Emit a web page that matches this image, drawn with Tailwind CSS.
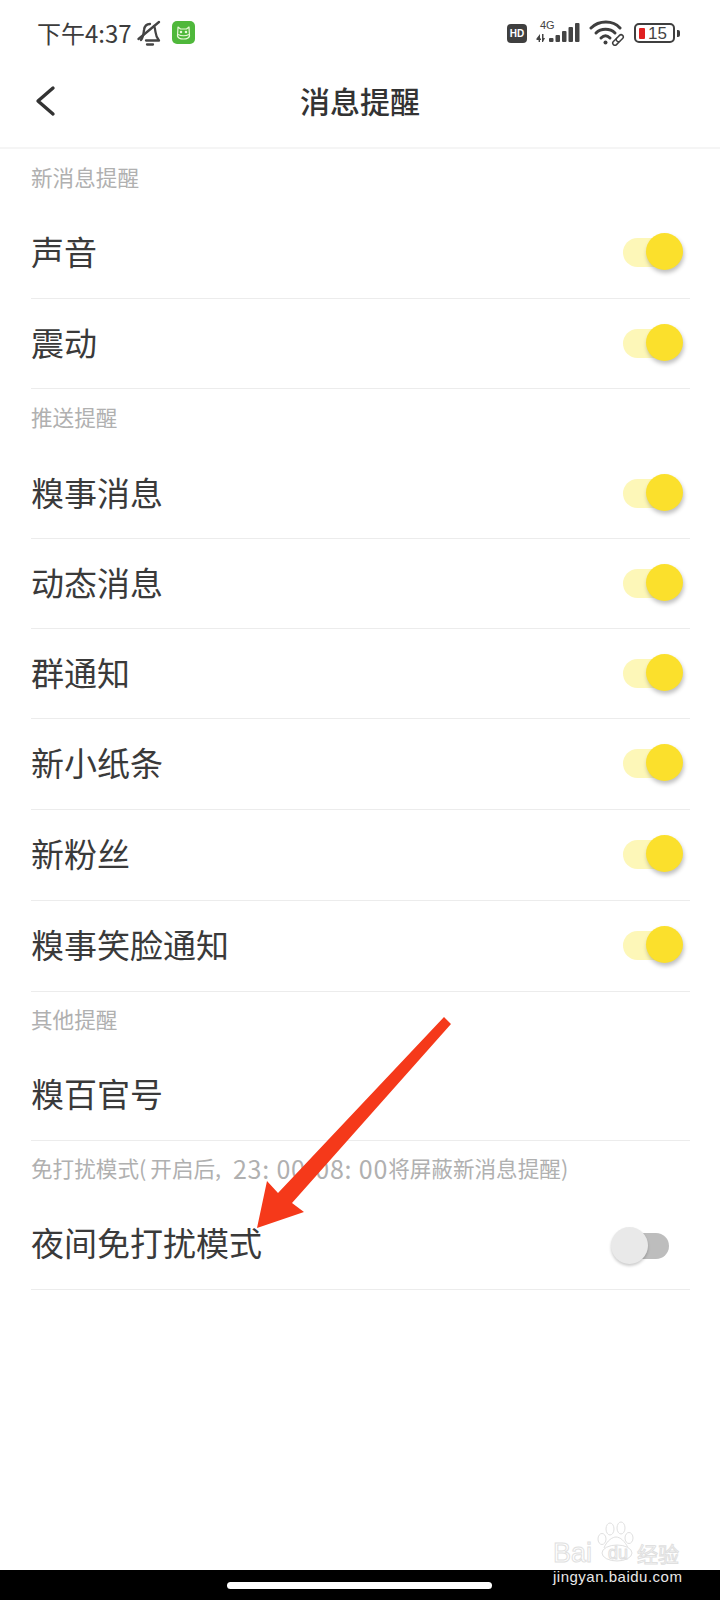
<!DOCTYPE html>
<html lang="zh-CN">
<head>
  <meta charset="UTF-8" />
  <meta name="viewport" content="width=device-width, initial-scale=1.0"/>
  <title>消息提醒</title>
  <script src="https://cdn.jsdelivr.net/npm/@tailwindcss/browser@4"></script>
</head>
<body class="bg-white font-['Noto_Sans_CJK_SC','Noto_Sans',sans-serif]">
<div class="relative w-[720px] h-[1600px] overflow-hidden flex flex-col bg-white">

  <!-- Status bar -->
  <div class="h-[66px] flex items-center pl-[37px] pr-[40px] shrink-0">
    <div class="flex items-center -mt-[1px]">
      <span class="text-[24px] leading-none text-[#3c3c3c]">下午4:37</span>
      <svg class="ml-[5px]" width="25" height="28" viewBox="0 0 25 28" fill="none" stroke="#444" stroke-width="2.300" stroke-linecap="round" stroke-linejoin="round">
        <path d="M4 21 C6.500 18 6.500 14 7 11 C7.500 7 10 5 13 5 M17 7 C18 9 18.300 11 18.500 13 C18.800 16 20 19 22 21.500 L9 21.500"/>
        <path d="M1.500 20 L22 3"/>
        <path d="M10 25.500 H16"/>
      </svg>
      <div class="ml-[10px] w-[23px] h-[23px] rounded-[5px] bg-[#4fb83b] flex items-center justify-center">
        <svg width="15" height="14" viewBox="0 0 15 14" fill="none" stroke="#e8f8d8" stroke-width="1.200" stroke-linejoin="round">
          <path d="M2 1 L4.500 3 H10.500 L13 1 L13.500 10 C13 12 11 13 7.500 13 C4 13 2 12 1.500 10 Z"/>
          <path d="M2 8.500 C5 10 10 10 13 8.500"/>
          <circle cx="5" cy="6" r="0.700"/>
          <circle cx="10" cy="6" r="0.700"/>
        </svg>
      </div>
    </div>
    <div class="ml-auto flex items-center">
      <div class="w-[20px] h-[19px] rounded-[4px] bg-[#3f3f3f] text-white text-[10px] font-bold leading-[19px] text-center font-['Liberation_Sans']">HD</div>
      <div class="relative ml-[8px] w-[46px] h-[26px]">
        <span class="absolute left-[5px] top-[0px] text-[11px] leading-[11px] font-medium text-[#444] font-['Liberation_Sans']">4G</span>
        <svg class="absolute left-0 top-0" width="46" height="26" viewBox="0 0 46 26" fill="#444">
          <path d="M1.500 18.500 L5 14 V18.500 H6 V20 H5 V22 H3.600 V20 H1.500 Z"/>
          <path d="M7 14 H8.500 V18 H10 L8 22 H7 Z"/>
          <rect x="14" y="18" width="4.500" height="4" rx="1"/>
          <rect x="20.500" y="15" width="4.500" height="7" rx="1"/>
          <rect x="27" y="11" width="4.500" height="11" rx="1"/>
          <rect x="33.500" y="7" width="4.500" height="15" rx="1"/>
          <rect x="40" y="3" width="4.500" height="19" rx="1"/>
        </svg>
      </div>
      <svg class="ml-[8px]" width="36" height="26" viewBox="0 0 36 26" fill="none" stroke="#3f3f3f" stroke-width="3" stroke-linecap="round">
        <path d="M2 8 C10 0 24 0 31 8"/>
        <path d="M7 13 C12 8 21 8 26 13"/>
        <path d="M12 18 C15 15 18 15 21 18"/>
        <circle cx="16.500" cy="22.500" r="2" fill="#3f3f3f" stroke="none"/>
        <g stroke-width="1.500" fill="#fff" transform="rotate(-45 29 20)">
          <rect x="22.500" y="17.800" width="8" height="4.400" rx="2.200"/>
          <rect x="27.500" y="17.800" width="8" height="4.400" rx="2.200"/>
        </g>
      </svg>
      <div class="ml-[9px] flex items-center">
        <div class="w-[41px] h-[20px] rounded-[5px] border-2 border-[#3f3f3f] flex items-center pl-[3px]">
          <div class="w-[6px] h-[11px] rounded-[1px] bg-[#e02020]"></div>
          <span class="ml-[3px] text-[17px] leading-none text-[#444] font-['Liberation_Sans']">15</span>
        </div>
        <div class="ml-[2px] w-[3px] h-[7px] rounded-r-[2px] bg-[#3f3f3f]"></div>
      </div>
    </div>
  </div>

  <!-- Title bar -->
  <div class="relative h-[84px] flex items-center justify-center border-b-2 border-[#f5f5f5] shrink-0 -mt-[1px]">
    <svg class="absolute left-[33px] top-[18px]" width="24" height="34" viewBox="0 0 24 34" fill="none" stroke="#333" stroke-width="3.400" stroke-linecap="round" stroke-linejoin="round">
      <path d="M20 5 L5 18 L20 31"/>
    </svg>
    <h1 class="text-[30px] leading-none font-medium text-[#333] -mt-[13px]">消息提醒</h1>
  </div>

  <!-- Settings list -->
  <div class="flex flex-col pl-[31px] pr-[30px]">
    <div class="h-[59px] pb-[4px] flex items-center text-[21.6px] leading-none text-[#b0b0b0]">新消息提醒</div>
    <div class="h-[91px] flex items-center justify-between border-b border-[#ececec] text-[33px] leading-none text-[#3a3a3a]">
      <span class="-mt-[3px]">声音</span>
      <div class="relative w-[60px] h-[38px] mr-[7px] -mt-[2px]"><div class="absolute left-0 top-[5px] w-[48px] h-[29px] rounded-full bg-[#fdf7b8]"></div><div class="absolute left-[23px] top-0 w-[37px] h-[37px] rounded-full bg-[#fbe02c] shadow-[1px_3px_4px_rgba(0,0,0,0.25)]"></div></div>
    </div>
    <div class="h-[90px] flex items-center justify-between border-b border-[#ececec] text-[33px] leading-none text-[#3a3a3a]">
      <span class="-mt-[3px]">震动</span>
      <div class="relative w-[60px] h-[38px] mr-[7px] -mt-[2px]"><div class="absolute left-0 top-[5px] w-[48px] h-[29px] rounded-full bg-[#fdf7b8]"></div><div class="absolute left-[23px] top-0 w-[37px] h-[37px] rounded-full bg-[#fbe02c] shadow-[1px_3px_4px_rgba(0,0,0,0.25)]"></div></div>
    </div>

    <div class="h-[60px] pb-[4px] flex items-center text-[21.6px] leading-none text-[#b0b0b0]">推送提醒</div>
    <div class="h-[90px] flex items-center justify-between border-b border-[#ececec] text-[33px] leading-none text-[#3a3a3a]">
      <span class="-mt-[3px]">糗事消息</span>
      <div class="relative w-[60px] h-[38px] mr-[7px] -mt-[2px]"><div class="absolute left-0 top-[5px] w-[48px] h-[29px] rounded-full bg-[#fdf7b8]"></div><div class="absolute left-[23px] top-0 w-[37px] h-[37px] rounded-full bg-[#fbe02c] shadow-[1px_3px_4px_rgba(0,0,0,0.25)]"></div></div>
    </div>
    <div class="h-[90px] flex items-center justify-between border-b border-[#ececec] text-[33px] leading-none text-[#3a3a3a]">
      <span class="-mt-[3px]">动态消息</span>
      <div class="relative w-[60px] h-[38px] mr-[7px] -mt-[2px]"><div class="absolute left-0 top-[5px] w-[48px] h-[29px] rounded-full bg-[#fdf7b8]"></div><div class="absolute left-[23px] top-0 w-[37px] h-[37px] rounded-full bg-[#fbe02c] shadow-[1px_3px_4px_rgba(0,0,0,0.25)]"></div></div>
    </div>
    <div class="h-[90px] flex items-center justify-between border-b border-[#ececec] text-[33px] leading-none text-[#3a3a3a]">
      <span class="-mt-[3px]">群通知</span>
      <div class="relative w-[60px] h-[38px] mr-[7px] -mt-[2px]"><div class="absolute left-0 top-[5px] w-[48px] h-[29px] rounded-full bg-[#fdf7b8]"></div><div class="absolute left-[23px] top-0 w-[37px] h-[37px] rounded-full bg-[#fbe02c] shadow-[1px_3px_4px_rgba(0,0,0,0.25)]"></div></div>
    </div>
    <div class="h-[91px] flex items-center justify-between border-b border-[#ececec] text-[33px] leading-none text-[#3a3a3a]">
      <span class="-mt-[3px]">新小纸条</span>
      <div class="relative w-[60px] h-[38px] mr-[7px] -mt-[2px]"><div class="absolute left-0 top-[5px] w-[48px] h-[29px] rounded-full bg-[#fdf7b8]"></div><div class="absolute left-[23px] top-0 w-[37px] h-[37px] rounded-full bg-[#fbe02c] shadow-[1px_3px_4px_rgba(0,0,0,0.25)]"></div></div>
    </div>
    <div class="h-[91px] flex items-center justify-between border-b border-[#ececec] text-[33px] leading-none text-[#3a3a3a]">
      <span class="-mt-[3px]">新粉丝</span>
      <div class="relative w-[60px] h-[38px] mr-[7px] -mt-[2px]"><div class="absolute left-0 top-[5px] w-[48px] h-[29px] rounded-full bg-[#fdf7b8]"></div><div class="absolute left-[23px] top-0 w-[37px] h-[37px] rounded-full bg-[#fbe02c] shadow-[1px_3px_4px_rgba(0,0,0,0.25)]"></div></div>
    </div>
    <div class="h-[91px] flex items-center justify-between border-b border-[#ececec] text-[33px] leading-none text-[#3a3a3a]">
      <span class="-mt-[3px]">糗事笑脸通知</span>
      <div class="relative w-[60px] h-[38px] mr-[7px] -mt-[2px]"><div class="absolute left-0 top-[5px] w-[48px] h-[29px] rounded-full bg-[#fdf7b8]"></div><div class="absolute left-[23px] top-0 w-[37px] h-[37px] rounded-full bg-[#fbe02c] shadow-[1px_3px_4px_rgba(0,0,0,0.25)]"></div></div>
    </div>

    <div class="h-[58px] pb-[4px] flex items-center text-[21.6px] leading-none text-[#b0b0b0]">其他提醒</div>
    <div class="h-[91px] flex items-center border-b border-[#ececec] text-[33px] leading-none text-[#3a3a3a]">
      <span class="-mt-[3px]">糗百官号</span>
    </div>

    <div class="h-[58px] pb-[4px] flex items-center text-[21.6px] leading-none text-[#b0b0b0] whitespace-pre">免打扰模式<span class="tracking-[4px]">(</span>开启后<span class="tracking-[3.5px]">, </span><span class="text-[25px] tracking-[0.8px]">23: 00-08: 00</span>将屏蔽新消息提醒)</div>
    <div class="h-[91px] flex items-center justify-between border-b border-[#ececec] text-[33px] leading-none text-[#3a3a3a]">
      <span class="-mt-[3px]">夜间免打扰模式</span>
      <div class="relative w-[58px] h-[40px] mr-[21px] mt-[6px]"><div class="absolute right-0 top-[6px] w-[40px] h-[26px] rounded-full bg-[#bdbdbd]"></div><div class="absolute left-0 top-0 w-[37px] h-[37px] rounded-full bg-[#e9e9e9] shadow-[0_2px_3px_rgba(0,0,0,0.2)]"></div></div>
    </div>
  </div>

  <!-- Home indicator bar -->
  <div class="mt-auto h-[30px] bg-black flex items-center shrink-0 pl-[227px]">
    <div class="w-[265px] h-[7px] rounded-full bg-white"></div>
  </div>

  <!-- Red annotation arrow -->
  <svg class="absolute left-0 top-0 pointer-events-none" width="720" height="1600" viewBox="0 0 720 1600">
    <polygon points="444,1017 451,1024 292,1203 304,1212 257,1228 267,1181 278,1193" fill="#f5391a"/>
  </svg>

  <!-- Watermark -->
  <div class="absolute left-[552px] top-[1520px] w-[168px] h-[80px]">
    <svg class="absolute left-[44px] top-[1px]" width="44" height="44" viewBox="0 0 44 44" fill="#fff" stroke="#e0e0e0" stroke-width="1">
      <ellipse cx="14" cy="8" rx="4" ry="6"/>
      <ellipse cx="25" cy="7" rx="4" ry="6"/>
      <ellipse cx="6" cy="18" rx="4" ry="5.500"/>
      <ellipse cx="33" cy="17" rx="4" ry="5.500"/>
      <path d="M8 27 C11 19 17 16 20 16 C24 16 29 20 32 27"/>
      <ellipse cx="21" cy="32" rx="15" ry="8"/>
    </svg>
    <span class="absolute left-[1px] top-[19px] text-[27px] leading-[28px] font-['Liberation_Sans'] text-white [-webkit-text-stroke:1px_#e0e0e0]">Bai</span>
    <span class="absolute left-[56px] top-[23px] text-[18px] leading-[20px] font-['Liberation_Sans'] text-white [-webkit-text-stroke:1px_#e0e0e0]">du</span>
    <span class="absolute left-[85px] top-[20px] text-[21px] leading-[26px] text-white [-webkit-text-stroke:1px_#e0e0e0]">经验</span>
    <span class="absolute left-[1px] top-[47px] text-[15px] leading-[20px] font-['Liberation_Sans'] text-[#e8e8e8] tracking-[0.5px]">jingyan.baidu.com</span>
  </div>
</div>
</body>
</html>
